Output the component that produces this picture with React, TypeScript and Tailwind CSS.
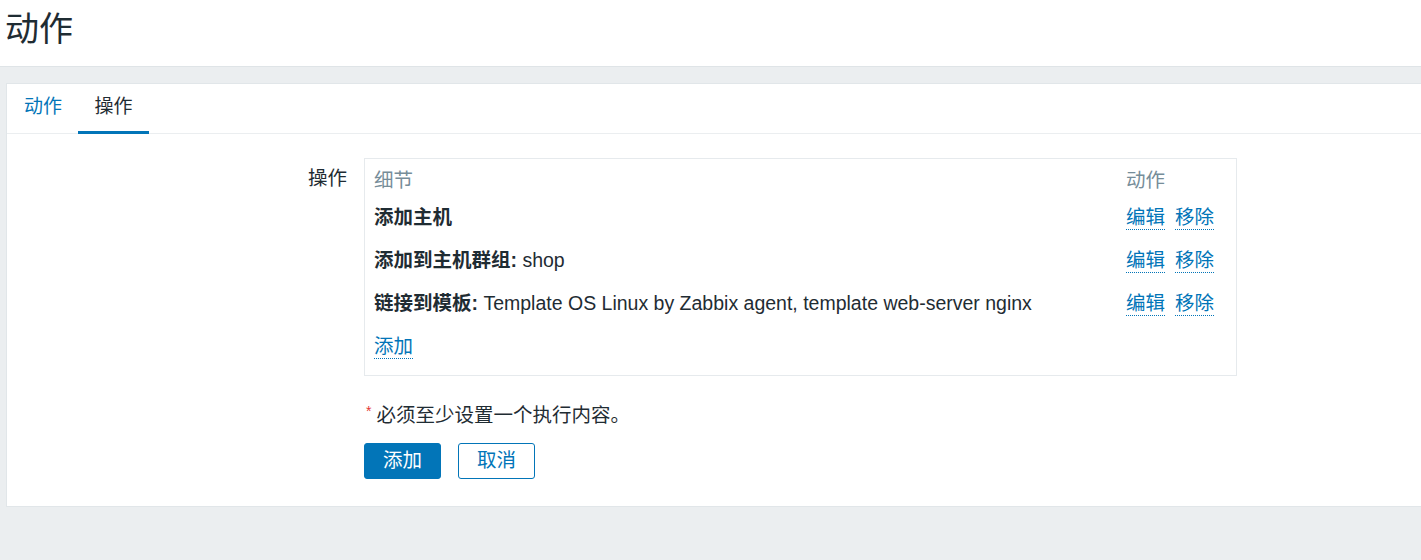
import React from "react";

// Operations rows shown in the table
const rows: { label: string; value?: string }[] = [
  { label: "添加主机" },
  { label: "添加到主机群组:", value: "shop" },
  { label: "链接到模板:", value: "Template OS Linux by Zabbix agent, template web-server nginx" },
];

function DottedLink({ children }: { children: React.ReactNode }) {
  return (
    <a className="text-[#0275b8] border-b border-dotted border-[#0275b8] leading-[23px] cursor-pointer">
      {children}
    </a>
  );
}

export default function App() {
  return (
    <div
      className="min-h-[560px] bg-[#ebeef0] text-[#1f2c33] text-[19.5px]"
      style={{ fontFamily: '"Liberation Sans", Arial, "Noto Sans CJK SC", sans-serif' }}
    >
      {/* Page header */}
      <header className="h-[67px] bg-white border-b border-[#dfe4e7] flex items-center pl-[5px]">
        <h1 className="text-[34px] leading-none text-[#1f2c33] -mt-[8px]">动作</h1>
      </header>

      {/* Card */}
      <div className="mt-[16px] ml-[6px] bg-white border border-r-0 border-[#e1e6e9] pb-[27px]">
        {/* Tabs */}
        <div className="flex h-[50px] border-b border-[#ebeef0] text-[19px]">
          <div className="pl-[17px] pr-[16px] flex items-center text-[#0275b8] border-b-[3px] border-transparent -mb-px">
            动作
          </div>
          <div className="px-[16.5px] flex items-center text-[#1f2c33] border-b-[3px] border-[#0275b8] -mb-px">
            操作
          </div>
        </div>

        {/* Form */}
        <div className="flex pt-[24px]">
          <div className="w-[340px] text-right pt-[8px] leading-[24px]">操作</div>
          <div className="ml-[17px] flex flex-col">
            <div className="w-[873px] border border-[#e6eaed] pl-[9px] pr-[10px] pt-[7px] pb-[6px]">
              <div className="grid grid-cols-[1fr_100px] h-[30px] items-center text-[#768d99]">
                <div>细节</div>
                <div>动作</div>
              </div>
              {rows.map((r, i) => (
                <div key={i} className="grid grid-cols-[1fr_100px] h-[43px] items-center">
                  <div>
                    <span className="font-bold">{r.label}</span>
                    {r.value && <span> {r.value}</span>}
                  </div>
                  <div className="flex gap-[10px]">
                    <DottedLink>编辑</DottedLink>
                    <DottedLink>移除</DottedLink>
                  </div>
                </div>
              ))}
              <div className="h-[44px] flex items-center">
                <DottedLink>添加</DottedLink>
              </div>
            </div>

            <div className="mt-[27px] leading-[24px] flex items-start">
              <span className="text-[#e33734] text-[14px] ml-[2px] mr-[5px] leading-[16px]">*</span>
              <span>必须至少设置一个执行内容。</span>
            </div>

            <div className="mt-[16px] flex gap-[17px]">
              <button className="w-[77px] h-[36px] rounded-[3px] bg-[#0275b8] text-white border border-[#0275b8]">
                添加
              </button>
              <button className="w-[77px] h-[36px] rounded-[3px] bg-white text-[#0275b8] border border-[#0275b8]">
                取消
              </button>
            </div>
          </div>
        </div>
      </div>
    </div>
  );
}
